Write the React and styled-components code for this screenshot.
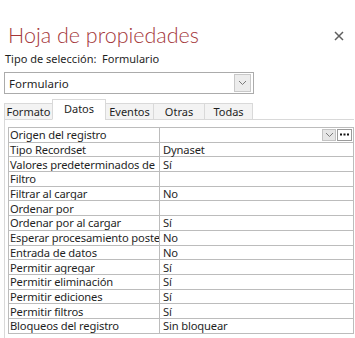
import React from "react";
import styled, { createGlobalStyle } from "styled-components";

const rows = [
  ["Origen del registro", "", true],
  ["Tipo Recordset", "Dynaset"],
  ["Valores predeterminados de", "Sí"],
  ["Filtro", ""],
  ["Filtrar al cargar", "No"],
  ["Ordenar por", ""],
  ["Ordenar por al cargar", "Sí"],
  ["Esperar procesamiento poste", "No"],
  ["Entrada de datos", "No"],
  ["Permitir agregar", "Sí"],
  ["Permitir eliminación", "Sí"],
  ["Permitir ediciones", "Sí"],
  ["Permitir filtros", "Sí"],
  ["Bloqueos del registro", "Sin bloquear"],
];

const tabs = [
  { label: "Formato", width: 49 },
  { label: "Datos", width: 54, active: true },
  { label: "Eventos", width: 49 },
  { label: "Otras", width: 52 },
  { label: "Todas", width: 49 },
];

export default function App() {
  return (
    <>
      <GlobalStyle />
      <Sheet>
        <Header>
          <Title>Hoja de propiedades</Title>
          <CloseButton>
            <svg width="10" height="10" viewBox="0 0 10 10">
              <path d="M1 1L9 9M9 1L1 9" stroke="#5f5f5f" strokeWidth="1.5" />
            </svg>
          </CloseButton>
        </Header>
        <SelectionLabel>Tipo de selección:&nbsp;&nbsp;Formulario</SelectionLabel>
        <Select>
          <SelectText>Formulario</SelectText>
          <ArrowButton>
            <Chevron />
          </ArrowButton>
        </Select>
        <TabBar>
          {tabs.map((t) => (
            <Tab key={t.label} $active={t.active} $width={t.width}>
              {t.label}
            </Tab>
          ))}
          <TabFiller />
        </TabBar>
        <TabPanel>
          <Grid>
            <tbody>
              {rows.map(([name, value, buttons]) => (
                <tr key={name}>
                  <NameCell>{name}</NameCell>
                  <ValueCell>
                    <ValueWrap>
                      <span>{value}</span>
                      {buttons && (
                        <CellButtons>
                          <SmallButton>
                            <Chevron />
                          </SmallButton>
                          <SmallButton $dots>
                            <svg width="9" height="3" viewBox="0 0 9 3">
                              <rect x="0" y="0.5" width="2" height="2" fill="#111" />
                              <rect x="3.5" y="0.5" width="2" height="2" fill="#111" />
                              <rect x="7" y="0.5" width="2" height="2" fill="#111" />
                            </svg>
                          </SmallButton>
                        </CellButtons>
                      )}
                    </ValueWrap>
                  </ValueCell>
                </tr>
              ))}
            </tbody>
          </Grid>
        </TabPanel>
      </Sheet>
    </>
  );
}

function Chevron() {
  return (
    <svg width="9" height="6" viewBox="0 0 9 6">
      <path d="M1 1L4.5 4.5L8 1" stroke="#7a7a7a" strokeWidth="1" fill="none" />
    </svg>
  );
}

const GlobalStyle = createGlobalStyle`
  body {
    margin: 0;
    background: #ffffff;
    font-family: "Noto Sans", "Open Sans", sans-serif;
    color: #1f1f1f;
  }
`;

const Sheet = styled.div`
  width: 355px;
  height: 338px;
  overflow: hidden;
  padding: 22px 1px 0 4px;
  box-sizing: border-box;
`;

const Header = styled.div`
  display: flex;
  align-items: center;
  justify-content: space-between;
  padding-left: 4px;
  height: 26px;
`;

const Title = styled.div`
  font-family: Lato, "Noto Sans", sans-serif;
  font-size: 21.5px;
  font-weight: 300;
  color: #a4373a;
`;

const CloseButton = styled.div`
  display: flex;
  margin-right: 10px;
  margin-top: 2px;
`;

const SelectionLabel = styled.div`
  font-size: 11px;
  padding-left: 1px;
  margin-top: 2px;
  height: 18px;
  line-height: 18px;
`;

const Select = styled.div`
  display: flex;
  align-items: center;
  justify-content: space-between;
  width: 250px;
  height: 22px;
  box-sizing: border-box;
  border: 1px solid #ababab;
  margin-top: 4px;
  padding: 0 2px 0 4px;
`;

const SelectText = styled.span`
  font-size: 11.5px;
`;

const ArrowButton = styled.div`
  display: flex;
  align-items: center;
  justify-content: center;
  width: 17px;
  height: 18px;
  box-sizing: border-box;
  border: 1px solid #c8c8c8;
  background: #ececec;
`;

const TabBar = styled.div`
  display: flex;
  align-items: flex-end;
  height: 22px;
  margin-top: 4px;
`;

const Tab = styled.div`
  display: flex;
  align-items: center;
  justify-content: center;
  box-sizing: border-box;
  flex: none;
  height: ${(p) => (p.$active ? "21px" : "17px")};
  width: ${(p) => p.$width}px;
  padding-bottom: ${(p) => (p.$active ? "3px" : "0")};
  font-size: 11px;
  white-space: nowrap;
  border: 1px solid #d9d9d9;
  border-bottom: ${(p) => (p.$active ? "1px solid #ffffff" : "1px solid #d9d9d9")};
  background: ${(p) => (p.$active ? "#ffffff" : "#f3f3f3")};
  margin-left: -1px;
  &:first-child {
    margin-left: 0;
  }
`;

const TabFiller = styled.div`
  flex: 1;
  border-bottom: 1px solid #d9d9d9;
`;

const TabPanel = styled.div`
  border-left: 1px solid #d9d9d9;
  padding: 7px 0 0 3px;
  height: 240px;
`;

const Grid = styled.table`
  border-collapse: collapse;
  width: 346px;
  table-layout: fixed;
  font-size: 11.2px;
  letter-spacing: -0.15px;
`;

const NameCell = styled.td`
  width: 149px;
  height: 13.7px;
  padding: 0 0 0 1px;
  border: 1px solid #bcbcbc;
  white-space: nowrap;
  overflow: hidden;
  text-overflow: clip;
  line-height: 13px;
`;

const ValueCell = styled.td`
  height: 13.7px;
  padding: 0 1px 0 3px;
  border: 1px solid #bcbcbc;
  white-space: nowrap;
  line-height: 13px;
`;

const ValueWrap = styled.div`
  display: flex;
  align-items: center;
  justify-content: space-between;
`;

const CellButtons = styled.div`
  display: flex;
  gap: 1px;
`;

const SmallButton = styled.div`
  display: flex;
  align-items: center;
  justify-content: center;
  width: ${(p) => (p.$dots ? "15px" : "14px")};
  height: 12px;
  box-sizing: border-box;
  border: 1px solid ${(p) => (p.$dots ? "#9a9a9a" : "#c3c3c3")};
  background: ${(p) => (p.$dots ? "#ffffff" : "#e6e6e6")};
`;
